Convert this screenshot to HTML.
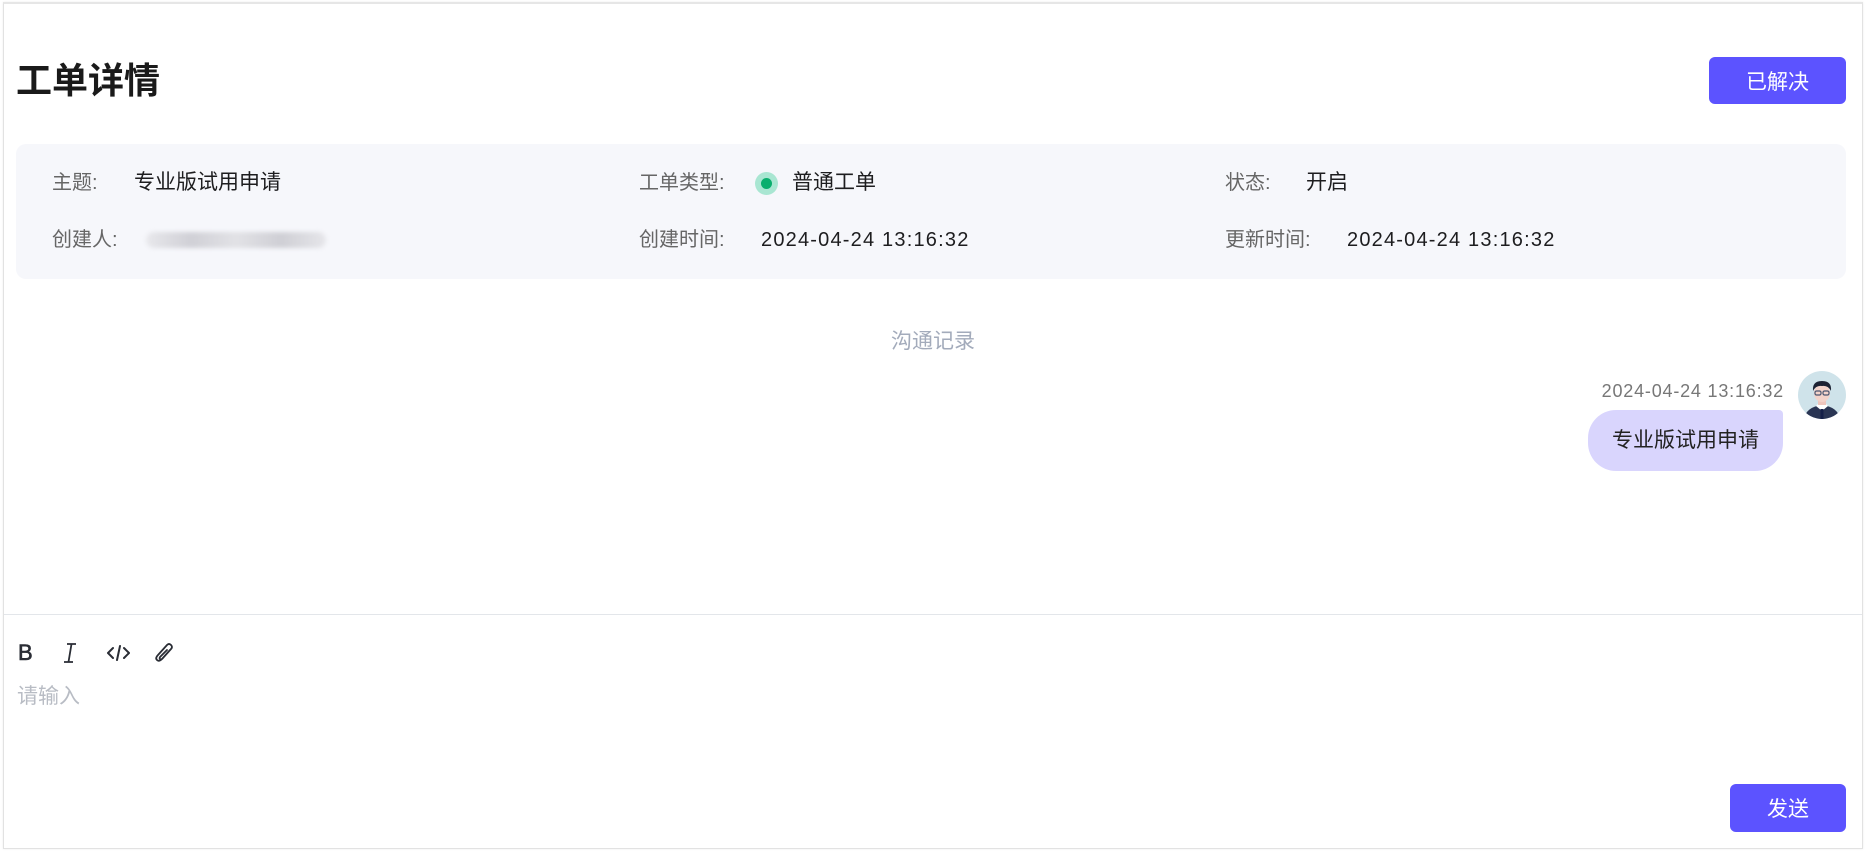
<!DOCTYPE html>
<html><head><meta charset="utf-8"><style>
*{margin:0;padding:0;box-sizing:border-box}
body{width:1866px;height:852px;background:#fff;font-family:"Liberation Sans","Noto Sans CJK SC",sans-serif;position:relative;overflow:hidden;color:#1d1d1f}
.frame{position:absolute;left:3px;top:2px;width:1860px;height:847px;border:1px solid #e2e2e2;border-top:2px solid #e6e6e6;box-shadow:0 0 2px rgba(0,0,0,.08)}
.a{position:absolute;white-space:nowrap}
.t{left:16px;top:60px;font-size:36px;font-weight:bold;line-height:42px;color:#1a1a1a}
.btn{position:absolute;background:#5c53ff;color:#fff;border-radius:6px;font-size:21px;display:flex;align-items:center;justify-content:center}
.box{position:absolute;left:16px;top:144px;width:1830px;height:135px;background:#f6f7fb;border-radius:10px}
.l{font-size:20px;color:#666;line-height:26px}
.v{font-size:21px;color:#1d1d1f;line-height:26px}
.d{font-size:20px;letter-spacing:1.2px;color:#1d1d1f;line-height:26px}
</style></head><body>
<div class="frame"></div>
<div class="a t">工单详情</div>
<div class="btn" style="left:1709px;top:57px;width:137px;height:47px">已解决</div>
<div class="box"></div>
<div class="a l" style="left:52px;top:170px">主题:</div>
<div class="a v" style="left:134px;top:170px">专业版试用申请</div>
<div class="a l" style="left:639px;top:170px">工单类型:</div>
<div class="a" style="left:755px;top:172px;width:23px;height:23px;border-radius:50%;background:#a9e6d2"></div>
<div class="a" style="left:761px;top:178px;width:11px;height:11px;border-radius:50%;background:#0aaf6e"></div>
<div class="a v" style="left:792px;top:170px">普通工单</div>
<div class="a l" style="left:1225px;top:170px">状态:</div>
<div class="a v" style="left:1306px;top:170px">开启</div>
<div class="a l" style="left:52px;top:227px">创建人:</div>
<div class="a" style="left:146px;top:232px;width:180px;height:16px;border-radius:8px;background:linear-gradient(90deg,#e8e8ec,#d0d0d6,#e2e2e6,#cfcfd5,#e6e6ea);filter:blur(2px)"></div>
<div class="a l" style="left:639px;top:227px">创建时间:</div>
<div class="a d" style="left:761px;top:227px">2024-04-24 13:16:32</div>
<div class="a l" style="left:1225px;top:227px">更新时间:</div>
<div class="a d" style="left:1347px;top:227px">2024-04-24 13:16:32</div>
<div class="a" style="left:0;width:1866px;text-align:center;top:329px;font-size:21px;color:#a3abbb;line-height:26px">沟通记录</div>
<div class="a" style="right:82px;top:380px;font-size:18px;letter-spacing:0.8px;color:#777;line-height:22px">2024-04-24 13:16:32</div>
<div class="a" style="left:1588px;top:410px;width:195px;height:61px;background:#d9d5fd;border-radius:28px 4px 28px 28px;font-size:21px;line-height:61px;text-align:center;color:#222">专业版试用申请</div>
<svg class="a" style="left:1798px;top:371px" width="48" height="48" viewBox="0 0 48 48">
<circle cx="24" cy="24" r="24" fill="#cfe3ea"/>
<clipPath id="c"><circle cx="24" cy="24" r="24"/></clipPath>
<g clip-path="url(#c)">
<path d="M6 48 Q8 36 24 34 Q40 36 42 48Z" fill="#2a3553"/>
<path d="M18 35 L24 40 L30 35 L28 33 L20 33Z" fill="#fff"/>
<rect x="22.5" y="38" width="3" height="10" fill="#152048"/>
<rect x="20" y="26" width="8" height="8" fill="#eec6bd"/>
<ellipse cx="24" cy="22" rx="8" ry="9" fill="#f3d3ca"/>
<path d="M15 20 Q14 10 24 10 Q34 10 33 20 Q30 14 24 15 Q18 14 15 20Z" fill="#1c2233"/>
<rect x="17" y="20" width="6" height="4" rx="1.5" fill="none" stroke="#4a5670" stroke-width="1.2"/>
<rect x="25" y="20" width="6" height="4" rx="1.5" fill="none" stroke="#4a5670" stroke-width="1.2"/>
</g></svg>
<div class="a" style="left:4px;top:614px;width:1858px;height:1px;background:#e3e6ea"></div>
<div class="a" style="left:18px;top:640px;font-size:22px;color:#2a2d35;line-height:26px;-webkit-text-stroke:0.6px #2a2d35">B</div>
<svg class="a" style="left:62px;top:642px" width="16" height="22" viewBox="0 0 16 22"><path d="M5 2H14M2 20H11M9.5 2L6.5 20" stroke="#2a2d35" stroke-width="1.8" fill="none"/></svg>
<svg class="a" style="left:106px;top:644px" width="25" height="18" viewBox="0 0 25 18"><path d="M7 4L2 9L7 14M18 4L23 9L18 14M14 2L11 16" stroke="#2a2d35" stroke-width="2" fill="none" stroke-linecap="round" stroke-linejoin="round"/></svg>
<svg class="a" style="left:153px;top:641px" width="22" height="24" viewBox="0 0 22 24"><path d="M17 9L9 18Q6 21 4 19Q2 17 5 14L14 4Q16 2 18 4Q20 6 18 8L9.5 17.5Q8 19 7 18Q6 17 7.5 15.5L14 9" stroke="#2a2d35" stroke-width="1.8" fill="none" stroke-linecap="round"/></svg>
<div class="a" style="left:17px;top:684px;font-size:21px;color:#b8bcc4;line-height:26px">请输入</div>
<div class="btn" style="left:1730px;top:784px;width:116px;height:48px">发送</div>
</body></html>
